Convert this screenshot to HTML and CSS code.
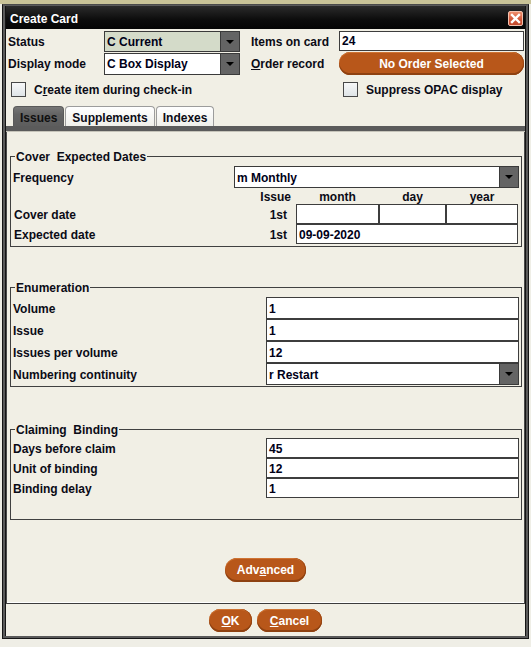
FILE: index.html
```html
<!DOCTYPE html>
<html>
<head>
<meta charset="utf-8">
<title>Create Card</title>
<link rel="stylesheet" href="styles.css">
</head>
<body>
<div class="window">
  <div class="inner">
    <div class="titlebar">
      <span class="title">Create Card</span>
      <span class="close"><svg width="13" height="13" viewBox="0 0 13 13"><path d="M3 3 L10 10 M10 3 L3 10" stroke="#fff" stroke-width="2.4" stroke-linecap="square"/></svg></span>
    </div>

    <div class="head-grid">
      <span class="lbl">Status</span>
      <div class="select sel-status"><span class="val">C Current</span><span class="drop"></span></div>
      <span class="lbl">Items on card</span>
      <div class="input input-items">24</div>
      <span class="lbl">Display mode</span>
      <div class="select sel-display"><span class="val">C Box Display</span><span class="drop"></span></div>
      <span class="lbl"><u>O</u>rder record</span>
      <div class="pill pill-order">No Order Selected</div>
    </div>

    <div class="check-row">
      <span class="check-item"><span class="box"></span>C<u>r</u>eate item during check-in</span>
      <span class="check-item"><span class="box"></span>Suppress OPAC display</span>
    </div>

    <div class="tabs">
      <span class="tab tab-active">Issues</span>
      <span class="tab">Supplements</span>
      <span class="tab">Indexes</span>
    </div>
    <div class="band"></div>

    <div class="panel">
      <fieldset class="group group-cover">
        <legend>Cover&nbsp;&nbsp;Expected Dates</legend>
        <div class="row-freq">
          <span class="lbl">Frequency</span>
          <div class="select sel-freq"><span class="val">m Monthly</span><span class="drop"></span></div>
        </div>
        <div class="cover-grid">
          <span></span>
          <span class="hdr hdr-issue">Issue</span>
          <span class="hdr">month</span>
          <span class="hdr">day</span>
          <span class="hdr">year</span>

          <span class="lbl lbl-indent">Cover date</span>
          <span class="ord">1st</span>
          <div class="input"></div>
          <div class="input"></div>
          <div class="input"></div>

          <span class="lbl lbl-indent">Expected date</span>
          <span class="ord">1st</span>
          <div class="input span3">09-09-2020</div>
        </div>
      </fieldset>

      <fieldset class="group group-enum">
        <legend>Enumeration</legend>
        <div class="form-grid rows22">
          <span class="lbl">Volume</span>
          <div class="input">1</div>
          <span class="lbl">Issue</span>
          <div class="input">1</div>
          <span class="lbl">Issues per volume</span>
          <div class="input">12</div>
          <span class="lbl">Numbering continuity</span>
          <div class="select"><span class="val">r Restart</span><span class="drop"></span></div>
        </div>
      </fieldset>

      <fieldset class="group group-claim">
        <legend>Claiming&nbsp;&nbsp;Binding</legend>
        <div class="form-grid rows20">
          <span class="lbl">Days before claim</span>
          <div class="input">45</div>
          <span class="lbl">Unit of binding</span>
          <div class="input">12</div>
          <span class="lbl">Binding delay</span>
          <div class="input">1</div>
        </div>
      </fieldset>

      <div class="pill pill-advanced">Adv<u>a</u>nced</div>
    </div>

    <div class="footer">
      <div class="pill pill-ok"><u>O</u>K</div>
      <div class="pill pill-cancel"><u>C</u>ancel</div>
    </div>
  </div>
</div>
</body>
</html>
```

FILE: styles.css
```css
* { box-sizing: border-box; }
html, body { margin: 0; padding: 0; }
body {
  width: 531px;
  height: 647px;
  overflow: hidden;
  background: linear-gradient(to bottom, #c9c398 0, #c9c398 4px, #efeee6 4px);
  font-family: "Liberation Sans", Arial, sans-serif;
  font-size: 12px;
  font-weight: bold;
  color: #0b0b16;
}
u { text-decoration: underline; text-underline-offset: 1px; }

.window {
  margin: 4px 0 0 2px;
  width: 527px;
  height: 635px;
  border: 1px solid #151515;
  border-top-color: #4a4a4a;
  padding: 1px 2px 2px 2px;
  background: #5a5a5a;
}
.inner {
  height: 630px;
  background: #f1efe5;
  border-left: 1px solid #151515;
  border-right: 1px solid #151515;
  display: flex;
  flex-direction: column;
}

/* title bar */
.titlebar {
  height: 23px;
  flex: none;
  display: flex;
  align-items: center;
  justify-content: space-between;
  padding: 0 2px 0 4px;
  background: linear-gradient(to bottom, #2b2b2b, #0c0c0c 60%, #050505);
  color: #fff;
}
.title { font-size: 12px; padding-top: 2px; }
.close {
  width: 15px;
  height: 15px;
  margin-top: 2px;
  display: flex;
  align-items: center;
  justify-content: center;
  border: 1px solid #f2c2b0;
  border-radius: 2px;
  background: linear-gradient(to bottom, #ef8e6c, #d2583a 55%, #c44a2c);
}

/* top form */
.head-grid {
  flex: none;
  display: grid;
  grid-template-columns: 96px 136px 88px 174px;
  grid-template-rows: 21px 22px;
  row-gap: 1px;
  padding: 2px 0 0 2px;
}
.head-grid > :nth-child(4n+3) { margin-left: 11px; width: 77px; white-space: nowrap; }
.head-grid > :nth-child(4n+4) { margin-left: 11px; width: 185px; }

.lbl {
  display: flex;
  align-items: center;
  white-space: nowrap;
}

.input {
  background: #fff;
  border: 1px solid #3d3d3d;
  padding-left: 2px;
  display: flex;
  align-items: center;
  white-space: nowrap;
  color: #000018;
}
.input-items { height: 20px; align-self: start; }

.select {
  display: flex;
  border: 1px solid #3a3a3a;
  background: #fff;
  color: #000018;
}
.select .val {
  flex: 1;
  display: flex;
  align-items: center;
  padding-left: 2px;
  white-space: nowrap;
}
.select .drop {
  width: 19px;
  flex: none;
  background: #646464;
  border-left: 1px solid #3a3a3a;
  display: flex;
  align-items: center;
  justify-content: center;
}
.select .drop::after {
  content: "";
  width: 0;
  height: 0;
  border-left: 4px solid transparent;
  border-right: 4px solid transparent;
  border-top: 4px solid #000;
}
.sel-status { background: #d4dbc9; }

.pill {
  display: flex;
  align-items: center;
  justify-content: center;
  height: 23px;
  border-radius: 12px;
  background: #b8571a;
  color: #fff;
  white-space: nowrap;
  box-shadow: inset 0 -2px 0 #8e4111, inset -1px 0 0 #9a4613, inset 0 1px 0 #cf7434;
}
.pill-order { align-self: start; margin-top: -1px; height: 23px; }

/* checkbox row */
.check-row {
  flex: none;
  display: grid;
  grid-template-columns: 332px 1fr;
  height: 15px;
  margin-top: 7px;
  padding-left: 5px;
}
.check-item {
  display: flex;
  align-items: center;
  white-space: nowrap;
}
.box {
  width: 15px;
  height: 15px;
  flex: none;
  margin-right: 8px;
  border: 1px solid #474747;
  background: linear-gradient(to bottom, #f7f8f8, #dfe4e7);
}

/* tabs */
.tabs {
  flex: none;
  display: flex;
  align-items: flex-end;
  gap: 1px;
  height: 20px;
  margin-top: 9px;
  padding-left: 7px;
}
.tab {
  height: 20px;
  padding: 2px 6px 0;
  display: flex;
  align-items: center;
  border: 1px solid #9c9c9c;
  border-bottom: none;
  border-radius: 4px 4px 0 0;
  background: linear-gradient(to bottom, #ffffff, #efefea);
  color: #0b0b16;
}
.tab-active {
  background: linear-gradient(to bottom, #777, #646464 40%, #5d5d5d);
  border-color: #5a5a5a;
  color: #101010;
}
.band {
  flex: none;
  height: 6px;
  background: #5b5b5b;
  border-bottom: 1px solid #c6c4ba;
}

/* panel */
.panel {
  flex: none;
  height: 472px;
  border-left: 1px solid #4a4a4a;
  border-right: 1px solid #4a4a4a;
  border-bottom: 1px solid #3c3c3c;
  box-shadow: inset 0 -1px 0 #ffffff;
  padding-bottom: 21px;
  display: flex;
  flex-direction: column;
}
.panel .lbl,
.panel .input,
.panel .val,
.panel .hdr,
.panel .ord { padding-top: 2px; }

.group {
  margin: 0 2px 0 3px;
  border: 1px solid #404040;
  padding: 2px;
  min-width: 0;
}
.group legend {
  padding: 2px 1px 0;
  margin-left: 2px;
  line-height: 13px;
  font-size: 12px;
  white-space: nowrap;
}
.group-cover { margin-top: 17px; }
.group-enum { margin-top: 33px; padding-bottom: 1px; }
.group-claim { margin-top: 35px; padding-top: 1px; padding-bottom: 21px; }

.row-freq {
  display: flex;
  height: 22px;
}
.row-freq .lbl { flex: 1; }
.sel-freq { width: 285px; }

.cover-grid {
  display: grid;
  grid-template-columns: 1fr 36px 83px 67px 72px;
  grid-template-rows: 16px 20px 20px;
  padding-right: 1px;
}
.hdr {
  display: flex;
  align-items: center;
  justify-content: center;
}
.hdr-issue { justify-content: flex-end; padding-right: 5px; }
.ord {
  display: flex;
  align-items: center;
  justify-content: flex-end;
  padding-right: 9px;
}
.lbl-indent { padding-left: 1px; }
.span3 { grid-column: 3 / span 3; }

.form-grid {
  display: grid;
  grid-template-columns: 1fr 253px;
}
.rows22 { grid-auto-rows: 22px; }
.rows20 { grid-auto-rows: 20px; }

.pill-advanced {
  align-self: center;
  margin-top: 38px;
  height: 24px;
  padding: 0 12px;
}

/* footer */
.footer {
  flex: none;
  height: 32px;
  display: flex;
  justify-content: center;
  gap: 5px;
  padding-top: 5px;
}
.pill-ok { width: 43px; }
.pill-cancel { width: 65px; }
```
